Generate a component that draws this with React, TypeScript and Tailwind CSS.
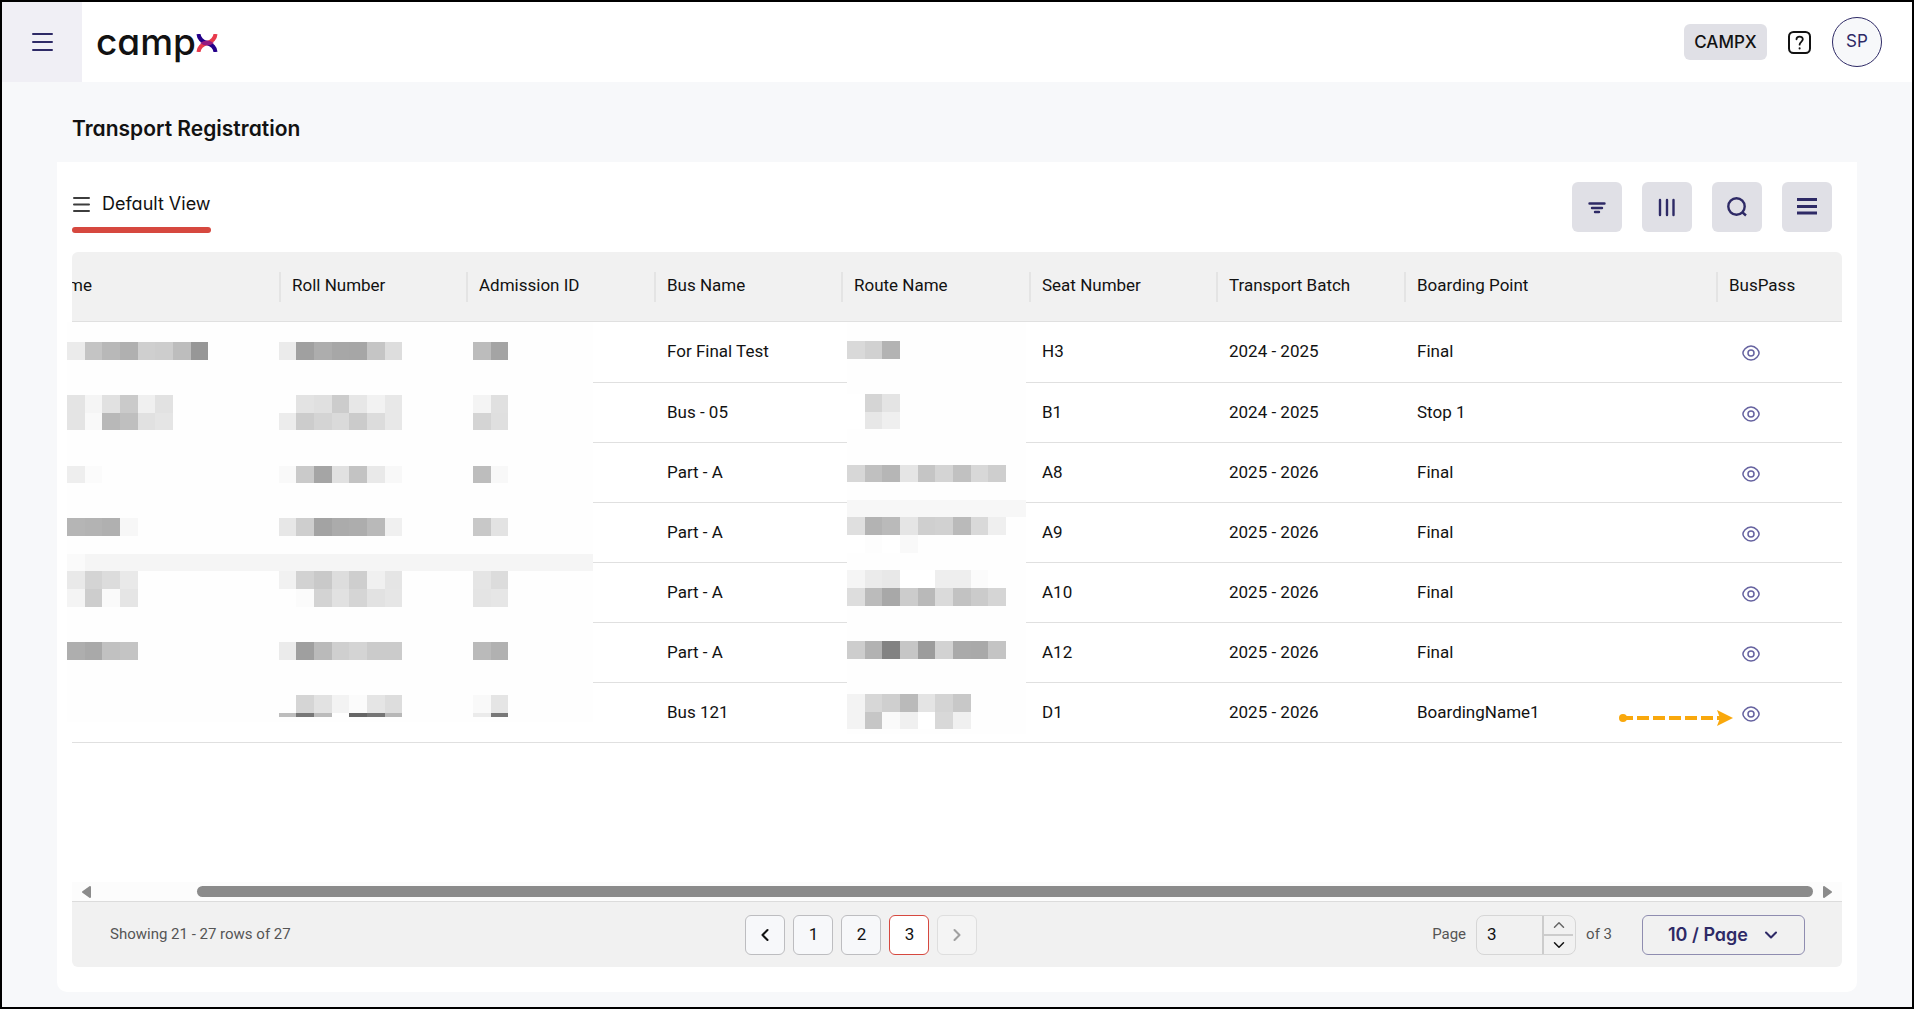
import { ChevronDown, ChevronLeft, ChevronRight, ChevronUp } from 'lucide-react'

const columns = [
  { label: 'Roll Number', width: 'w-[187px]' },
  { label: 'Admission ID', width: 'w-[188px]' },
  { label: 'Bus Name', width: 'w-[187px]' },
  { label: 'Route Name', width: 'w-[188px]' },
  { label: 'Seat Number', width: 'w-[187px]' },
  { label: 'Transport Batch', width: 'w-[188px]' },
  { label: 'Boarding Point', width: 'w-[312px]' },
  { label: 'BusPass', width: 'w-[125px]' },
]

const rows = [
  { bus: 'For Final Test', seat: 'H3', batch: '2024 - 2025', point: 'Final' },
  { bus: 'Bus - 05', seat: 'B1', batch: '2024 - 2025', point: 'Stop 1' },
  { bus: 'Part - A', seat: 'A8', batch: '2025 - 2026', point: 'Final' },
  { bus: 'Part - A', seat: 'A9', batch: '2025 - 2026', point: 'Final' },
  { bus: 'Part - A', seat: 'A10', batch: '2025 - 2026', point: 'Final' },
  { bus: 'Part - A', seat: 'A12', batch: '2025 - 2026', point: 'Final' },
  { bus: 'Bus 121', seat: 'D1', batch: '2025 - 2026', point: 'BoardingName1' },
]

type Strip = { y: number; h: number; shades: string[] }

// Column edges of the redaction blocks, and one grey per block
const nameEdges = [67, 85, 102, 120, 138, 155, 173, 191, 208]
const rollEdges = [279, 296, 314, 332, 349, 367, 385, 402]
const admissionEdges = [473, 491, 508]
const routeEdges = [847, 865, 882, 900, 918, 935, 953, 971, 988, 1006]

const nameStrips: Strip[] = [
  { y: 342, h: 18, shades: ['#ebebeb', '#c4c4c4', '#b8b8b8', '#b0b0b0', '#cfcfcf', '#cdcdcd', '#bdbdbd', '#979797'] },
  { y: 395, h: 18, shades: ['#e4e4e4', '#f5f5f5', '#e1e1e1', '#cacaca', '#f0f0f0', '#e2e2e2'] },
  { y: 413, h: 17, shades: ['#e4e4e4', '#f9f9f9', '#b8b8b8', '#bfbfbf', '#e1e1e1', '#e5e5e5'] },
  { y: 466, h: 17, shades: ['#eeeeee', '#fbfbfb'] },
  { y: 518, h: 18, shades: ['#b5b5b5', '#b3b3b3', '#b0b0b0', '#f7f7f7'] },
  { y: 571, h: 18, shades: ['#e9e9e9', '#d4d4d4', '#dcdcdc', '#e9e9e9'] },
  { y: 589, h: 18, shades: ['#f4f4f4', '#cdcdcd', '#fafafa', '#e5e5e5'] },
  { y: 642, h: 18, shades: ['#aeaeae', '#a9a9a9', '#c1c1c1', '#c4c4c4'] },
]

const rollStrips: Strip[] = [
  { y: 342, h: 18, shades: ['#ebebeb', '#a0a0a0', '#adadad', '#a7a7a7', '#a6a6a6', '#c5c5c5', '#dddddd'] },
  { y: 395, h: 18, shades: ['#fefefe', '#e3e3e3', '#e0e0e0', '#cccccc', '#e7e7e7', '#f2f2f2', '#e8e8e8'] },
  { y: 413, h: 17, shades: ['#ececec', '#cccccc', '#d4d4d4', '#dadada', '#cbcbcb', '#dcdcdc', '#e8e8e8'] },
  { y: 466, h: 17, shades: ['#f9f9f9', '#cacaca', '#a5a5a5', '#e1e1e1', '#c3c3c3', '#e9e9e9', '#f8f8f8'] },
  { y: 518, h: 18, shades: ['#e7e7e7', '#cecece', '#a3a3a3', '#ababab', '#adadad', '#b9b9b9', '#f0f0f0'] },
  { y: 571, h: 18, shades: ['#f1f1f1', '#d2d2d2', '#c9c9c9', '#dddddd', '#cecece', '#f0f0f0', '#e5e5e5'] },
  { y: 589, h: 18, shades: ['#fefefe', '#fbfbfb', '#d3d3d3', '#e1e1e1', '#d5d5d5', '#e2e2e2', '#e6e6e6'] },
  { y: 642, h: 18, shades: ['#ebebeb', '#9f9f9f', '#bababa', '#cfcfcf', '#d4d4d4', '#cbcbcb', '#cbcbcb'] },
  { y: 695, h: 18, shades: ['#fefefe', '#d5d5d5', '#e2e2e2', '#f3f3f3', '#fbfbfb', '#e5e5e5', '#dddddd'] },
  { y: 713, h: 4, shades: ['#bdbdbd', '#777777', '#bbbbbb', '#fefefe', '#666666', '#757575', '#b7b7b7'] },
]

const admissionStrips: Strip[] = [
  { y: 342, h: 18, shades: ['#bcbcbc', '#a4a4a4'] },
  { y: 395, h: 18, shades: ['#f4f4f4', '#e0e0e0'] },
  { y: 413, h: 17, shades: ['#d4d4d4', '#dfdfdf'] },
  { y: 466, h: 17, shades: ['#bdbdbd', '#f8f8f8'] },
  { y: 518, h: 18, shades: ['#c8c8c8', '#e3e3e3'] },
  { y: 571, h: 18, shades: ['#e5e5e5', '#dcdcdc'] },
  { y: 589, h: 18, shades: ['#e4e4e4', '#e6e6e6'] },
  { y: 642, h: 18, shades: ['#bababa', '#b1b1b1'] },
  { y: 695, h: 18, shades: ['#f9f9f9', '#e5e5e5'] },
  { y: 713, h: 4, shades: ['#ebebeb', '#787878'] },
]

const routeStrips: Strip[] = [
  { y: 341, h: 18, shades: ['#d9d9d9', '#d1d1d1', '#b3b3b3'] },
  { y: 394, h: 18, shades: ['#ffffff', '#d5d5d5', '#e4e4e4'] },
  { y: 412, h: 17, shades: ['#ffffff', '#e7e7e7', '#efefef'] },
  { y: 465, h: 17, shades: ['#d7d7d7', '#c0c0c0', '#b6b6b6', '#e5e5e5', '#c5c5c5', '#d4d4d4', '#c1c1c1', '#d8d8d8', '#cecece'] },
  { y: 517, h: 18, shades: ['#dfdfdf', '#b3b3b3', '#bababa', '#e5e5e5', '#cfcfcf', '#d1d1d1', '#bababa', '#d9d9d9', '#efefef'] },
  { y: 535, h: 18, shades: ['#ffffff', '#fdfdfd', '#ffffff', '#f9f9f9'] },
  { y: 570, h: 18, shades: ['#f5f5f5', '#ebebeb', '#e8e8e8', '#ffffff', '#ffffff', '#eeeeee', '#eeeeee', '#fbfbfb'] },
  { y: 588, h: 18, shades: ['#dddddd', '#bbbbbb', '#a8a8a8', '#cccccc', '#b9b9b9', '#dadada', '#c2c2c2', '#cbcbcb', '#d5d5d5'] },
  { y: 641, h: 18, shades: ['#cdcdcd', '#b2b2b2', '#828282', '#c6c6c6', '#9c9c9c', '#d2d2d2', '#aaaaaa', '#a9a9a9', '#c4c4c4'] },
  { y: 694, h: 18, shades: ['#f3f3f3', '#d7d7d7', '#cfcfcf', '#bababa', '#e4e4e4', '#d4d4d4', '#c8c8c8'] },
  { y: 712, h: 17, shades: ['#f3f3f3', '#c6c6c6', '#fafafa', '#f0f0f0', '#ffffff', '#d8d8d8', '#f0f0f0'] },
]

function Mosaic({ edges, strips }: { edges: number[]; strips: Strip[] }) {
  return (
    <g shapeRendering="crispEdges">
      {strips.map((strip) =>
        strip.shades.map((shade, i) => (
          <rect
            key={`${strip.y}-${i}`}
            x={edges[i]}
            y={strip.y}
            width={edges[i + 1] - edges[i]}
            height={strip.h}
            fill={shade}
          />
        )),
      )}
    </g>
  )
}

function Logo() {
  return (
    <a href="#" aria-label="campx" className="ml-[14px] flex items-center">
      <span className="text-[37px] leading-10 font-medium text-[#121212] [font-feature-settings:'cv11']">camp</span>
      <svg width="22" height="18" viewBox="0 0 22 18" fill="none" strokeWidth="4" className="mt-[2px]">
        <path d="M2.500 0C3 5.500 6 7.500 11 9S19 12.500 19.500 18" stroke="#24008a" />
        <path d="M19.500 0C19 5.500 16 7.500 11 9S3 12.500 2.500 18" stroke="#e83a4c" />
        <path d="M4 9Q11 4 18 9Q11 14 4 9Z" fill="#931a80" />
      </svg>
    </a>
  )
}

function EyeIcon() {
  return (
    <svg width="18" height="16" viewBox="0 0 18 16" fill="none" stroke="#6663a0" strokeWidth="1.500">
      <path d="M0.900 8C0.900 6 4 0.900 9 0.900S17.100 6 17.100 8S14 15.100 9 15.100S0.900 10 0.900 8Z" />
      <circle cx="9" cy="8" r="3" />
    </svg>
  )
}

const tools = [
  {
    label: 'Filter',
    icon: <path d="M5.500 9.500H20.500M8 14H18M11 18H15" strokeWidth="2.400" strokeLinecap="round" />,
  },
  {
    label: 'Columns',
    icon: <path d="M6 6V21M13 6V21M19.500 6V21" strokeWidth="2.400" strokeLinecap="round" />,
  },
  {
    label: 'Search',
    icon: (
      <>
        <circle cx="12.500" cy="12.500" r="8.200" strokeWidth="2.400" />
        <path d="M18 18L22 21.500" strokeWidth="2.400" />
      </>
    ),
  },
  {
    label: 'More',
    icon: <path d="M3 5.500H23M3 12.500H23M3 19H23" strokeWidth="2.800" />,
  },
]

const pageButton = 'flex size-10 items-center justify-center rounded-md border text-[17px]'

export default function App() {
  return (
    <div className="flex min-h-screen flex-col border-2 border-black bg-[#f7f8fa] font-['Inter',sans-serif] text-[#121212]">
      <header className="flex h-20 items-center bg-white">
        <button aria-label="Menu" className="flex size-20 items-center justify-center bg-[#f0eff5]">
          <svg width="21" height="18" viewBox="0 0 21 18" stroke="#2e2a66" strokeWidth="2" strokeLinecap="round">
            <path d="M1 1H20M1 9H20M1 17H20" />
          </svg>
        </button>
        <Logo />
        <div className="mr-[30px] ml-auto flex items-center">
          <button className="h-9 w-[83px] rounded-md bg-[#e0e0e6] pt-px text-[17px] font-medium text-[#121212]">CAMPX</button>
          <button aria-label="Help" className="ml-[21px]">
            <svg width="23" height="23" viewBox="0 0 23 23" fill="none" stroke="#121212" strokeLinecap="round">
              <rect x="1" y="1" width="21" height="21" rx="4.500" strokeWidth="2" />
              <path d="M8.500 8.300C8.500 4.600 14.800 4.600 14.800 8.300C14.800 10.800 11.600 10.900 11.600 13.700" strokeWidth="1.800" />
              <path d="M11.600 17.300V17.400" strokeWidth="2" />
            </svg>
          </button>
          <button className="ml-[21px] size-[50px] rounded-full border border-[#2e2a66] bg-[#f7f8fa] text-[17px] text-[#2e2a66]">
            SP
          </button>
        </div>
      </header>

      <main className="flex flex-1 flex-col px-[55px] pb-[15px]">
        <h1 className="px-[15px] pt-8 pb-[18px] text-[21px] leading-[30px] font-semibold [font-feature-settings:'cv11']">
          Transport Registration
        </h1>

        <section className="flex flex-1 flex-col rounded-b-[10px] bg-white px-[15px] pb-[25px]">
          <div className="flex h-[90px] items-start justify-between pt-5 pr-[10px]">
            <button className="flex h-[51px] flex-col justify-between">
              <span className="flex items-center gap-3 pt-1 text-[18px] leading-9 [font-feature-settings:'cv11']">
                <svg width="18" height="15" viewBox="0 0 18 15" stroke="#3d3d3d" strokeWidth="2" strokeLinecap="round">
                  <path d="M2 1H17M2 7.500H17M2 14H17" />
                </svg>
                Default View
              </span>
              <span className="h-[6px] w-full rounded-full bg-[#d6483f]" />
            </button>
            <div className="flex gap-5">
              {tools.map((tool) => (
                <button
                  key={tool.label}
                  aria-label={tool.label}
                  className="flex size-[50px] items-center justify-center rounded-md bg-[#e0e0e6]"
                >
                  <svg width="26" height="26" viewBox="0 0 26 26" fill="none" stroke="#2e2a66">
                    {tool.icon}
                  </svg>
                </button>
              ))}
            </div>
          </div>

          <div className="relative flex-1 font-['Roboto',sans-serif]">
            <table className="w-full table-fixed border-separate border-spacing-0 text-left text-[17px] leading-6">
              <thead>
                <tr className="h-[70px]">
                  <th className="w-[208px] rounded-tl-md border-b border-[#e0e0e0] bg-[#f1f1f1] pb-[3px] font-normal">
                    {/* scrolled half out of view */}
                    <span className="flex w-5 justify-end overflow-hidden">me</span>
                  </th>
                  {columns.map((column) => (
                    <th
                      key={column.label}
                      className={`${column.width} border-b border-[#e0e0e0] bg-[#f1f1f1] font-normal last:rounded-tr-md`}
                    >
                      <span className="-ml-px flex h-[30px] items-center border-l-2 border-[#e4e4e4] pb-[3px] pl-[11px]">
                        {column.label}
                      </span>
                    </th>
                  ))}
                </tr>
              </thead>
              <tbody>
                {rows.map((row) => (
                  <tr
                    key={row.seat}
                    className="h-15 first:h-[61px] [&>td]:border-b [&>td]:border-[#e0e0e0] [&>td]:pb-[2px]"
                  >
                    <td />
                    <td />
                    <td />
                    <td className="pl-3">{row.bus}</td>
                    <td />
                    <td className="pl-3">{row.seat}</td>
                    <td className="pl-3">{row.batch}</td>
                    <td className="pl-3">{row.point}</td>
                    <td className="pt-1 pl-[25px]">
                      <button aria-label="View bus pass" className="block">
                        <EyeIcon />
                      </button>
                    </td>
                  </tr>
                ))}
              </tbody>
            </table>

            {/* Redacted personal data */}
            <svg className="absolute top-[70px] left-[-5px]" width="526" height="400" viewBox="67 322 526 400">
              <rect x="67" y="322" width="526" height="400" fill="#fefefe" />
              <rect x="67" y="554" width="18" height="17" fill="#fafafa" />
              <rect x="85" y="554" width="508" height="17" fill="#f5f5f5" />
              <Mosaic edges={nameEdges} strips={nameStrips} />
              <Mosaic edges={rollEdges} strips={rollStrips} />
              <Mosaic edges={admissionEdges} strips={admissionStrips} />
            </svg>
            <svg className="absolute top-[70px] left-[775px]" width="179" height="412" viewBox="847 322 179 412">
              <rect x="847" y="322" width="179" height="412" fill="#fefefe" />
              <rect x="847" y="500" width="179" height="17" fill="#f7f7f7" />
              <Mosaic edges={routeEdges} strips={routeStrips} />
            </svg>

            {/* Pointer to the last bus pass */}
            <svg className="absolute top-[457px] right-[108px]" width="116" height="18" viewBox="0 0 116 18">
              <circle cx="5" cy="9" r="4" fill="#f9a80c" />
              <path d="M8 9H15M19 9H31M35 9H47M51 9H63M67 9H79M83 9H95M99 9H106" stroke="#f9a80c" strokeWidth="4" />
              <path d="M99 1L115 9L99 17L102 9Z" fill="#f9a80c" />
            </svg>
          </div>

          {/* Horizontal scrollbar */}
          <div className="flex h-5 items-center border-b border-[#dcdcdc] bg-[#fcfcfc] px-[10px]">
            <svg width="9" height="12" viewBox="0 0 9 12" fill="#8b8b8b" stroke="#8b8b8b" strokeWidth="2" strokeLinejoin="round">
              <path d="M8 1V11L1 6Z" />
            </svg>
            <div className="mr-[10px] ml-[106px] h-[11px] flex-1 rounded-full bg-[#8b8b8b]" />
            <svg width="9" height="12" viewBox="0 0 9 12" fill="#8b8b8b" stroke="#8b8b8b" strokeWidth="2" strokeLinejoin="round">
              <path d="M1 1V11L8 6Z" />
            </svg>
          </div>

          <footer className="flex h-[65px] items-center justify-between rounded-b-md bg-[#f1f1f1] pr-[37px] pl-[38px] font-['Roboto',sans-serif] text-[15px] text-[#555555]">
            <p>Showing 21 - 27 rows of 27</p>
            <nav aria-label="Pagination" className="flex gap-2 text-[#121212]">
              <button aria-label="Previous page" className={`${pageButton} border-[#bdbdc0] bg-[#f7f8fa]`}>
                <ChevronLeft size={20} strokeWidth={2.5} />
              </button>
              <button className={`${pageButton} border-[#bdbdc0] bg-[#f7f8fa]`}>1</button>
              <button className={`${pageButton} border-[#bdbdc0] bg-[#f7f8fa]`}>2</button>
              <button aria-current="page" className={`${pageButton} border-[#d6483f] bg-white`}>3</button>
              <button aria-label="Next page" disabled className={`${pageButton} border-[#dedede] bg-[#f4f4f4] text-[#a0a0a0]`}>
                <ChevronRight size={20} strokeWidth={2.5} />
              </button>
            </nav>
            <div className="flex items-center">
              <label htmlFor="page">Page</label>
              <div className="mx-[10px] flex h-10 w-[100px] rounded-lg border border-[#d6d6d6]">
                <input
                  id="page"
                  type="text"
                  defaultValue="3"
                  className="w-[65px] bg-transparent pl-[10px] text-[17px] text-[#121212] outline-none"
                />
                <div className="flex flex-1 flex-col border-l-2 border-[#cccccc]">
                  <button aria-label="Increase page" className="mr-[2px] flex flex-1 items-center justify-center border-b-2 border-[#cccccc] text-[#666666]">
                    <ChevronUp size={18} strokeWidth={2} />
                  </button>
                  <button aria-label="Decrease page" className="mr-[2px] flex flex-1 items-center justify-center text-[#121212]">
                    <ChevronDown size={18} strokeWidth={2} />
                  </button>
                </div>
              </div>
              <span>of 3</span>
              <div className="relative ml-[30px] flex items-center">
                <select
                  aria-label="Rows per page"
                  className="h-10 w-[163px] appearance-none rounded-md border border-[#8f8db0] bg-transparent pl-[25px] font-['Inter',sans-serif] text-[18px] font-semibold text-[#2e2a66] [font-feature-settings:'cv11']"
                >
                  <option>10 / Page</option>
                </select>
                <ChevronDown size={20} strokeWidth={2.5} className="pointer-events-none absolute right-[24px] text-[#2e2a66]" />
              </div>
            </div>
          </footer>
        </section>
      </main>
    </div>
  )
}
